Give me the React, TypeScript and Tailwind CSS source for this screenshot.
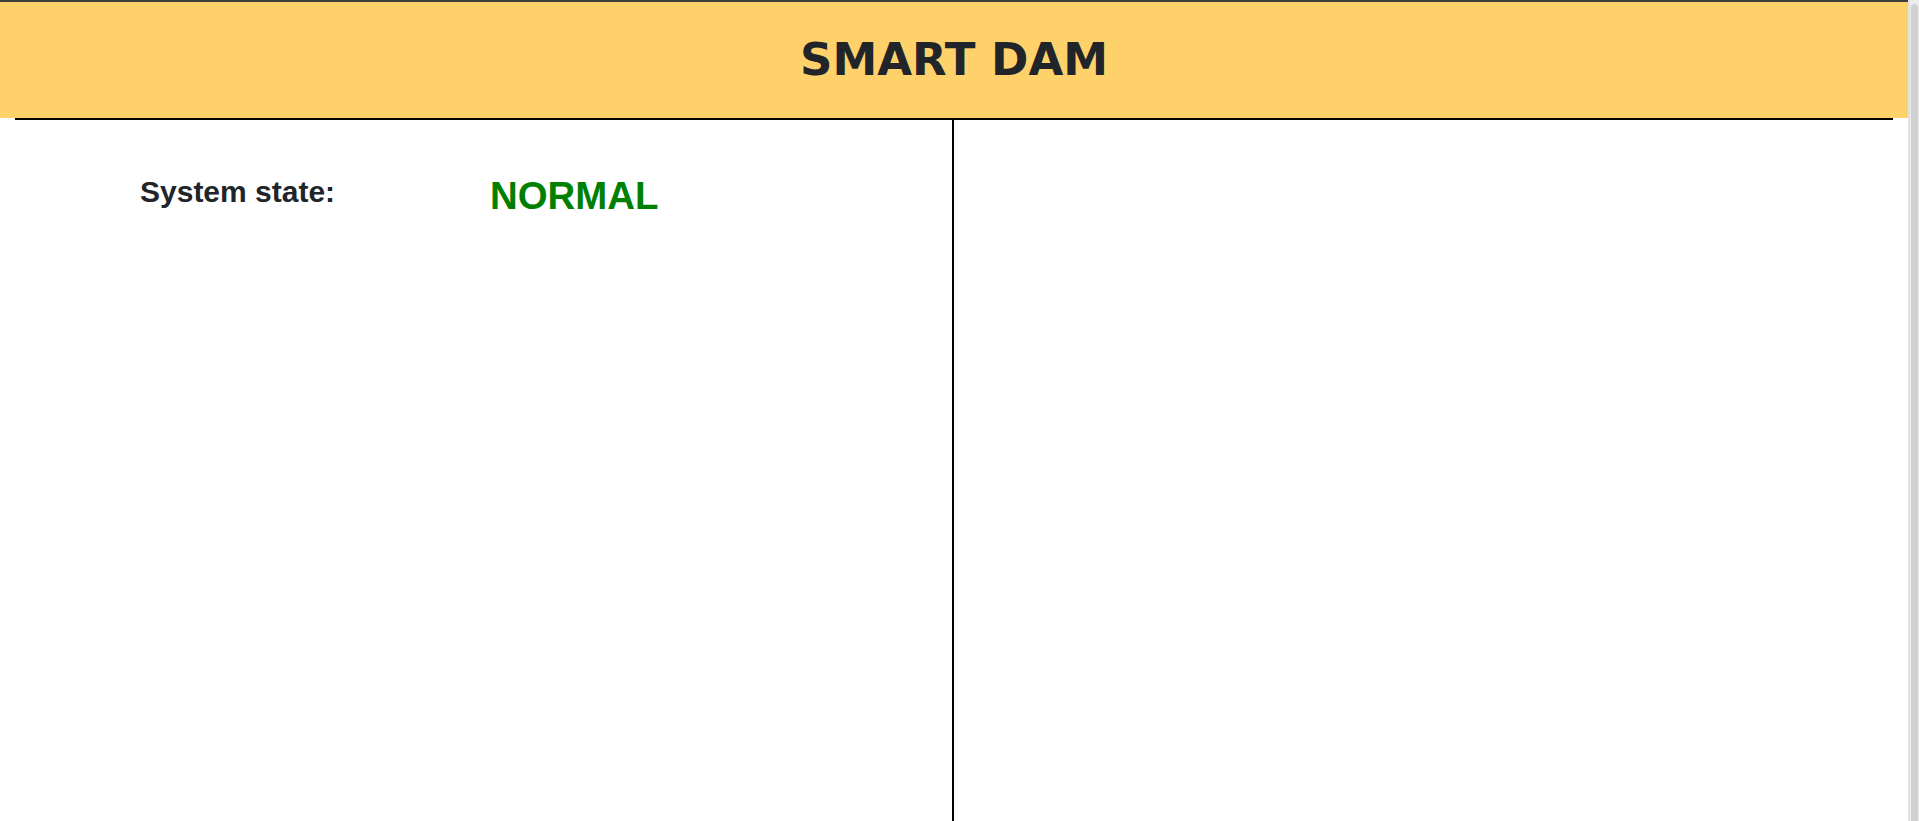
export default function App() {
  return (
    <div className="flex h-[821px] w-full overflow-hidden bg-white">
      <div className="flex min-w-0 flex-1 flex-col">
        <div className="h-[2px] bg-[#3d3d3d]" />
        <header className="flex h-[116px] items-center justify-center bg-[#ffd16b]">
          <h1 className="text-[45px] font-bold leading-[1.2] text-[#212529] [font-family:'DejaVu_Sans',sans-serif]">
            SMART DAM
          </h1>
        </header>

        <main className="mx-[15px] grid flex-1 grid-cols-2 border-t-2 border-black">
          <section className="border-r-2 border-black pt-[50px] pl-[125px]">
            <div className="flex items-start [font-family:'Liberation_Sans',Arial,sans-serif]">
              <span className="mt-[4px] w-[350px] text-[30px] font-bold leading-[1.2] text-[#212529]">
                System state:
              </span>
              <span className="mt-[3px] text-[38.4px] font-bold leading-[1.2] text-[#008000]">
                NORMAL
              </span>
            </div>
          </section>
          <section />
        </main>
      </div>

      {/* fake scrollbar */}
      <div className="flex w-[11px] flex-col border-l-2 border-[#e4e0dc] bg-[#ececec] pt-[4px]">
        <div className="flex-1 rounded-t-full bg-[#d0d0d0] mx-[1px]" />
      </div>
    </div>
  );
}
